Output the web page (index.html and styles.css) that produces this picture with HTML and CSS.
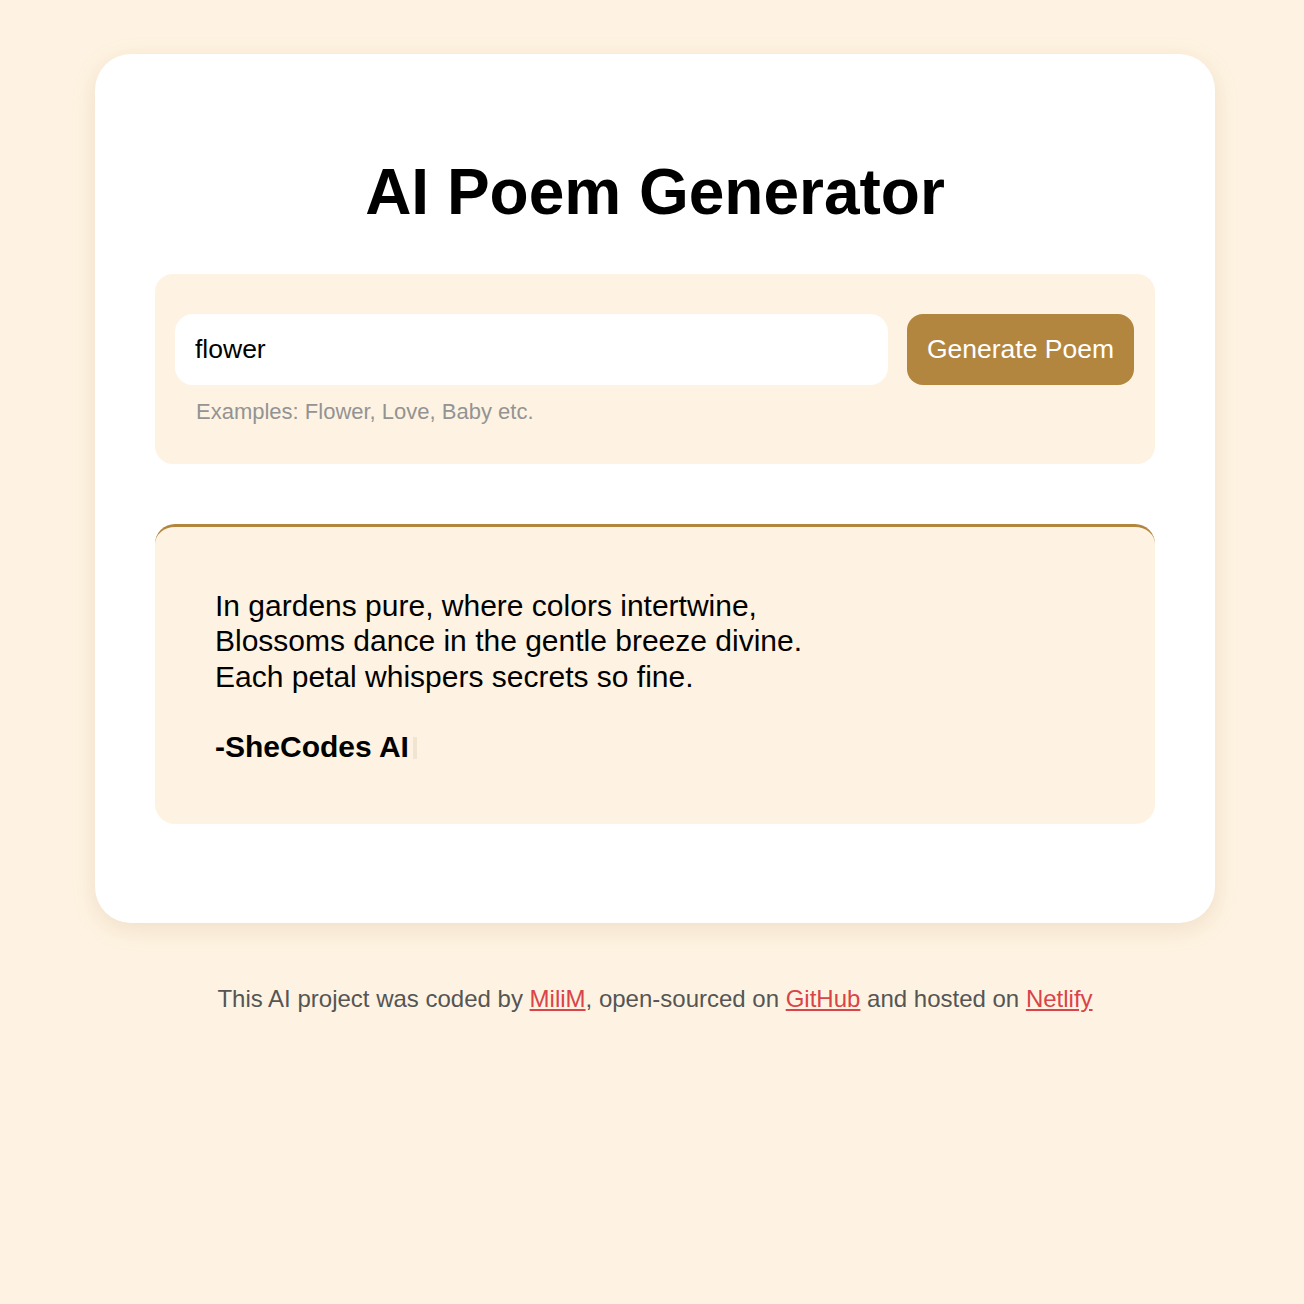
FILE: index.html
```html
<!DOCTYPE html>
<html lang="en">
<head>
<meta charset="utf-8">
<title>AI Poem Generator</title>
<link rel="stylesheet" href="styles.css">
</head>
<body>
<div class="container">
  <h1 class="title">AI Poem Generator</h1>
  <form class="search-form">
    <div class="search-row">
      <input class="search-input" type="text" value="flower">
      <button class="search-button" type="button">Generate Poem</button>
    </div>
    <div class="hint">Examples: Flower, Love, Baby etc.</div>
  </form>
  <div class="poem">
    In gardens pure, where colors intertwine,<br>
    Blossoms dance in the gentle breeze divine.<br>
    Each petal whispers secrets so fine.<br>
    <br>
    <strong>-SheCodes AI</strong><span class="cursor"></span>
  </div>
</div>
<footer class="footer">
  This AI project was coded by <a href="#">MiliM</a>, open-sourced on <a href="#">GitHub</a> and hosted on <a href="#">Netlify</a>
</footer>
</body>
</html>
```
FILE: styles.css
```css
html, body {
  margin: 0;
  background: #fef3e2;
}
body {
  padding: 54px 0 0 6px;
  font-family: "Liberation Sans", Arial, Helvetica, sans-serif;
  color: #000;
}
.container {
  width: 1120px;
  box-sizing: border-box;
  margin: 0 auto;
  background: #fff;
  border-radius: 36px;
  padding: 101px 60px 99px;
  box-shadow: 0 6px 24px rgba(160, 120, 60, 0.16);
}
.title {
  margin: 0 0 45px;
  text-align: center;
  font-size: 64px;
  font-weight: 700;
  line-height: 74px;
}
.search-form {
  background: #fef3e2;
  border-radius: 18px;
  padding: 40px 21px 40px 20px;
}
.search-row {
  display: flex;
  gap: 19px;
}
.search-input {
  flex: 1;
  min-width: 0;
  height: 71px;
  box-sizing: border-box;
  border: none;
  border-radius: 18px;
  background: #fff;
  padding: 0 20px;
  font-family: inherit;
  font-size: 26.5px;
  color: #000;
  outline: none;
}
.search-button {
  height: 71px;
  border: none;
  border-radius: 16px;
  background: #b3863f;
  color: #fff;
  padding: 0 20px;
  font-family: inherit;
  font-size: 26.5px;
  cursor: pointer;
}
.hint {
  margin-top: 15px;
  padding-left: 21px;
  font-size: 22px;
  line-height: 24px;
  color: #939393;
}
.poem {
  margin-top: 60px;
  background: #fef3e2;
  border-top: 3px solid #b3863f;
  border-radius: 20px;
  padding: 61px 60px 60px;
  font-size: 30px;
  line-height: 35.25px;
}
.poem strong {
  font-weight: 700;
}
.cursor {
  display: inline-block;
  width: 4px;
  height: 22px;
  margin-left: 4px;
  vertical-align: -2px;
  background: #f1e5d2;
}
.footer {
  margin-top: 62px;
  text-align: center;
  font-size: 24px;
  line-height: 28px;
  color: #555;
}
.footer a {
  color: #d9434a;
}
```
